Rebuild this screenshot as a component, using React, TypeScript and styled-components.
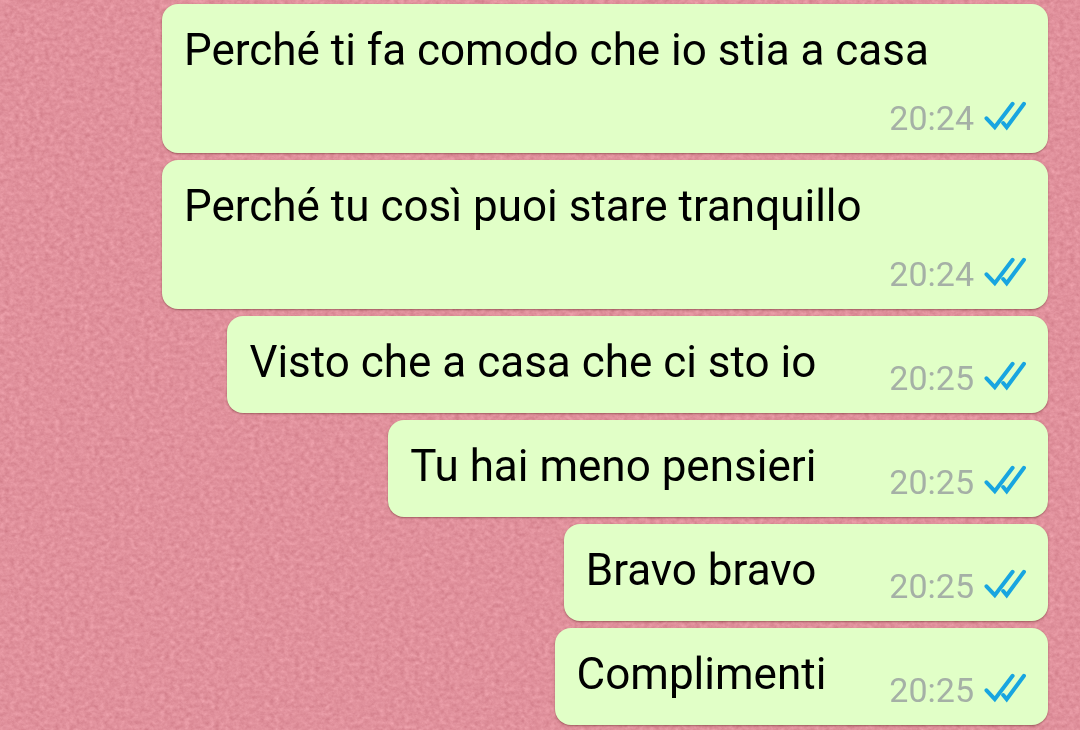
import React from "react";
import styled, { createGlobalStyle } from "styled-components";

const GlobalStyle = createGlobalStyle`
  * { box-sizing: border-box; }
  html { overflow: hidden auto; scrollbar-width: none; }
  body {
    margin: 0;
    background: #e0909c;
    font-family: Roboto, "Noto Sans", sans-serif;
  }
`;

const Wallpaper = styled.svg`
  position: fixed;
  inset: 0;
  width: 100%;
  height: 100%;
  z-index: -1;
`;

const Thread = styled.ul`
  display: flex;
  flex-direction: column;
  align-items: flex-end;
  gap: 7px;
  margin: 0;
  padding: 4px 32px 5px 15%;
  list-style: none;
`;

const Bubble = styled.li<{ $tight?: boolean }>`
  display: flex;
  flex-wrap: wrap;
  justify-content: space-between;
  column-gap: ${(p) => (p.$tight ? 63 : 73)}px;
  max-width: 100%;
  padding: 20px 22px 15px;
  border-radius: 16px;
  background: #e1ffc7;
  box-shadow: 0 1px 2px rgba(110, 50, 50, 0.55);
`;

const Text = styled.p`
  margin: 0;
  padding-bottom: 10px;
  color: #000;
  font-size: 44px;
  line-height: 52px;
`;

const Meta = styled.div`
  display: flex;
  align-items: flex-end;
  gap: 10px;
  height: 52px;
  margin-left: auto;
  align-self: flex-end;
`;

const Time = styled.time`
  color: #a5b0a6;
  font-size: 34px;
  line-height: 39px;
`;

const Ticks = styled.svg`
  width: 42px;
  height: 30px;
  margin-bottom: 7px;
  fill: none;
  stroke: #18a5e0;
  stroke-width: 4;
  stroke-linecap: round;
`;

const messages = [
  { text: "Perché ti fa comodo che io stia a casa", time: "20:24" },
  { text: "Perché tu così puoi stare tranquillo", time: "20:24" },
  { text: "Visto che a casa che ci sto io", time: "20:25" },
  { text: "Tu hai meno pensieri", time: "20:25" },
  { text: "Bravo bravo", time: "20:25" },
  { text: "Complimenti", time: "20:25", tight: true },
];

function PaperTexture() {
  return (
    <Wallpaper aria-hidden="true">
      <filter id="grain" x="0" y="0" width="100%" height="100%" colorInterpolationFilters="sRGB">
        <feTurbulence type="fractalNoise" baseFrequency="0.2 0.24" numOctaves="4" seed="8" />
        <feColorMatrix
          values="0.12 0.06 0 0 0.79
                  0.15 0.08 0 0 0.452
                  0.14 0.08 0 0 0.502
                  0 0 0 0 1"
        />
      </filter>
      <rect width="100%" height="100%" filter="url(#grain)" />
    </Wallpaper>
  );
}

function ReadTicks() {
  return (
    <Ticks viewBox="0 0 42 30" role="img" aria-label="Letto">
      <path d="M2.5 17.3 L10.8 26.2 L28.6 2.8" />
      <path d="M19.2 22 L22.7 26.2 L40 2.8" />
    </Ticks>
  );
}

export default function App() {
  return (
    <>
      <GlobalStyle />
      <PaperTexture />
      <main>
        <Thread>
          {messages.map((message) => (
            <Bubble key={message.text} $tight={message.tight}>
              <Text>{message.text}</Text>
              <Meta>
                <Time>{message.time}</Time>
                <ReadTicks />
              </Meta>
            </Bubble>
          ))}
        </Thread>
      </main>
    </>
  );
}
